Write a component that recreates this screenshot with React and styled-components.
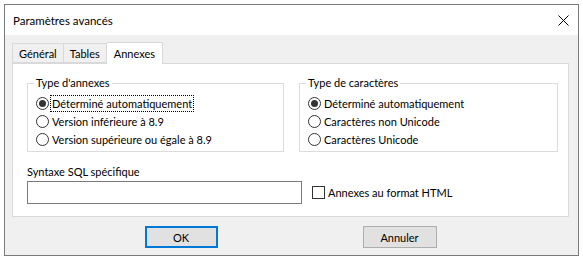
import { useState } from 'react'
import styled, { createGlobalStyle } from 'styled-components'

const GlobalStyle = createGlobalStyle`
  html, body {
    margin: 0;
    background: #fff;
  }
  body {
    padding: 4px;
    font-family: Lato, "Segoe UI", sans-serif;
    font-size: 11px;
    color: #000;
  }
`

const Window = styled.div`
  width: 575px;
  height: 252px;
  box-sizing: border-box;
  border: 1px solid #7a7a7a;
  background: #f0f0f0;
  display: flex;
  flex-direction: column;
`

const TitleBar = styled.div`
  height: 30px;
  background: #fff;
  display: flex;
  align-items: center;
  justify-content: space-between;
  padding: 0 9px 0 8px;
`

const Title = styled.span`
  font-size: 11.5px;
`

const Body = styled.div`
  flex: 1;
  display: flex;
  flex-direction: column;
  padding: 6px 9px 0 7px;
`

const TabStrip = styled.div`
  display: flex;
  align-items: flex-end;
  height: 22px;
  position: relative;
  z-index: 1;
`

const Tab = styled.div`
  box-sizing: border-box;
  height: ${p => (p.$active ? 22 : 20)}px;
  padding: 0 ${p => (p.$active ? 7 : 6)}px;
  margin-bottom: ${p => (p.$active ? -1 : 0)}px;
  display: flex;
  align-items: center;
  background: ${p => (p.$active ? '#fff' : '#f0f0f0')};
  border: 1px solid #d9d9d9;
  border-bottom: ${p => (p.$active ? 'none' : '1px solid #d9d9d9')};
  & + & {
    border-left: none;
  }
`

const Panel = styled.div`
  height: 154px;
  box-sizing: border-box;
  background: #fff;
  border: 1px solid #d9d9d9;
  padding: 12px 10px 0 14px;
  display: flex;
  flex-direction: column;
`

const GroupRow = styled.div`
  display: flex;
  gap: 15px;
`

const Group = styled.fieldset`
  margin: 0;
  box-sizing: border-box;
  width: ${p => p.$width}px;
  height: 76px;
  border: 1px solid #dcdcdc;
  padding: 4px 0 0 8px;
  display: flex;
  flex-direction: column;
  min-width: 0;
  & > legend {
    padding: 0 2px;
    margin-left: -2px;
    line-height: 14px;
  }
`

const RadioRow = styled.label`
  display: flex;
  align-items: center;
  height: 18px;
  gap: 2px;
`

const RadioCircle = styled.span`
  width: 11px;
  height: 11px;
  border: 1px solid #333;
  border-radius: 50%;
  background: #fff;
  display: flex;
  align-items: center;
  justify-content: center;
  flex-shrink: 0;
  &::after {
    content: '';
    width: 7px;
    height: 7px;
    border-radius: 50%;
    background: #333;
    display: ${p => (p.$checked ? 'block' : 'none')};
  }
`

const RadioText = styled.span`
  padding: 0 1px;
  line-height: 15px;
  outline: ${p => (p.$focus ? '1px dotted #000' : 'none')};
`

const SqlBlock = styled.div`
  margin-top: 12px;
  display: flex;
  flex-direction: column;
`

const SqlLabel = styled.div`
  line-height: 16px;
  margin-bottom: 1px;
`

const SqlRow = styled.div`
  display: flex;
  align-items: center;
  gap: 10px;
`

const TextInput = styled.div`
  width: 275px;
  height: 23px;
  box-sizing: border-box;
  border: 1px solid #7a7a7a;
  background: #fff;
`

const CheckRow = styled.label`
  display: flex;
  align-items: center;
  gap: 3px;
`

const CheckBox = styled.span`
  width: 11px;
  height: 11px;
  border: 1px solid #333;
  background: #fff;
`

const Footer = styled.div`
  display: flex;
  justify-content: center;
  gap: 145px;
  padding-top: 9px;
`

const Button = styled.button`
  width: ${p => p.$width}px;
  height: 22px;
  box-sizing: border-box;
  font: inherit;
  font-size: 11px;
  color: #000;
  padding: 0;
  background: #e1e1e1;
  border: ${p => (p.$default ? '2px solid #0078d7' : '1px solid #adadad')};
`

const CloseIcon = () => (
  <svg width="11" height="11" viewBox="0 0 11 11">
    <path d="M0.5 0.5 L10.5 10.5 M10.5 0.5 L0.5 10.5" stroke="#000" strokeWidth="1" />
  </svg>
)

const Radio = ({ checked, focus, children }) => (
  <RadioRow>
    <RadioCircle $checked={checked} />
    <RadioText $focus={focus}>{children}</RadioText>
  </RadioRow>
)

export default function App () {
  const [tab] = useState('Annexes')

  return (
    <>
      <GlobalStyle />
      <Window>
        <TitleBar>
          <Title>Paramètres avancés</Title>
          <CloseIcon />
        </TitleBar>
        <Body>
          <TabStrip>
            {['Général', 'Tables', 'Annexes'].map(t => (
              <Tab key={t} $active={t === tab}>{t}</Tab>
            ))}
          </TabStrip>
          <Panel>
            <GroupRow>
              <Group $width={257}>
                <legend>Type d'annexes</legend>
                <Radio checked focus>Déterminé automatiquement</Radio>
                <Radio>Version inférieure à 8.9</Radio>
                <Radio>Version supérieure ou égale à 8.9</Radio>
              </Group>
              <Group $width={259}>
                <legend>Type de caractères</legend>
                <Radio checked>Déterminé automatiquement</Radio>
                <Radio>Caractères non Unicode</Radio>
                <Radio>Caractères Unicode</Radio>
              </Group>
            </GroupRow>
            <SqlBlock>
              <SqlLabel>Syntaxe SQL spécifique</SqlLabel>
              <SqlRow>
                <TextInput />
                <CheckRow>
                  <CheckBox />
                  <span>Annexes au format HTML</span>
                </CheckRow>
              </SqlRow>
            </SqlBlock>
          </Panel>
          <Footer>
            <Button $default $width={73}>OK</Button>
            <Button $width={74}>Annuler</Button>
          </Footer>
        </Body>
      </Window>
    </>
  )
}
